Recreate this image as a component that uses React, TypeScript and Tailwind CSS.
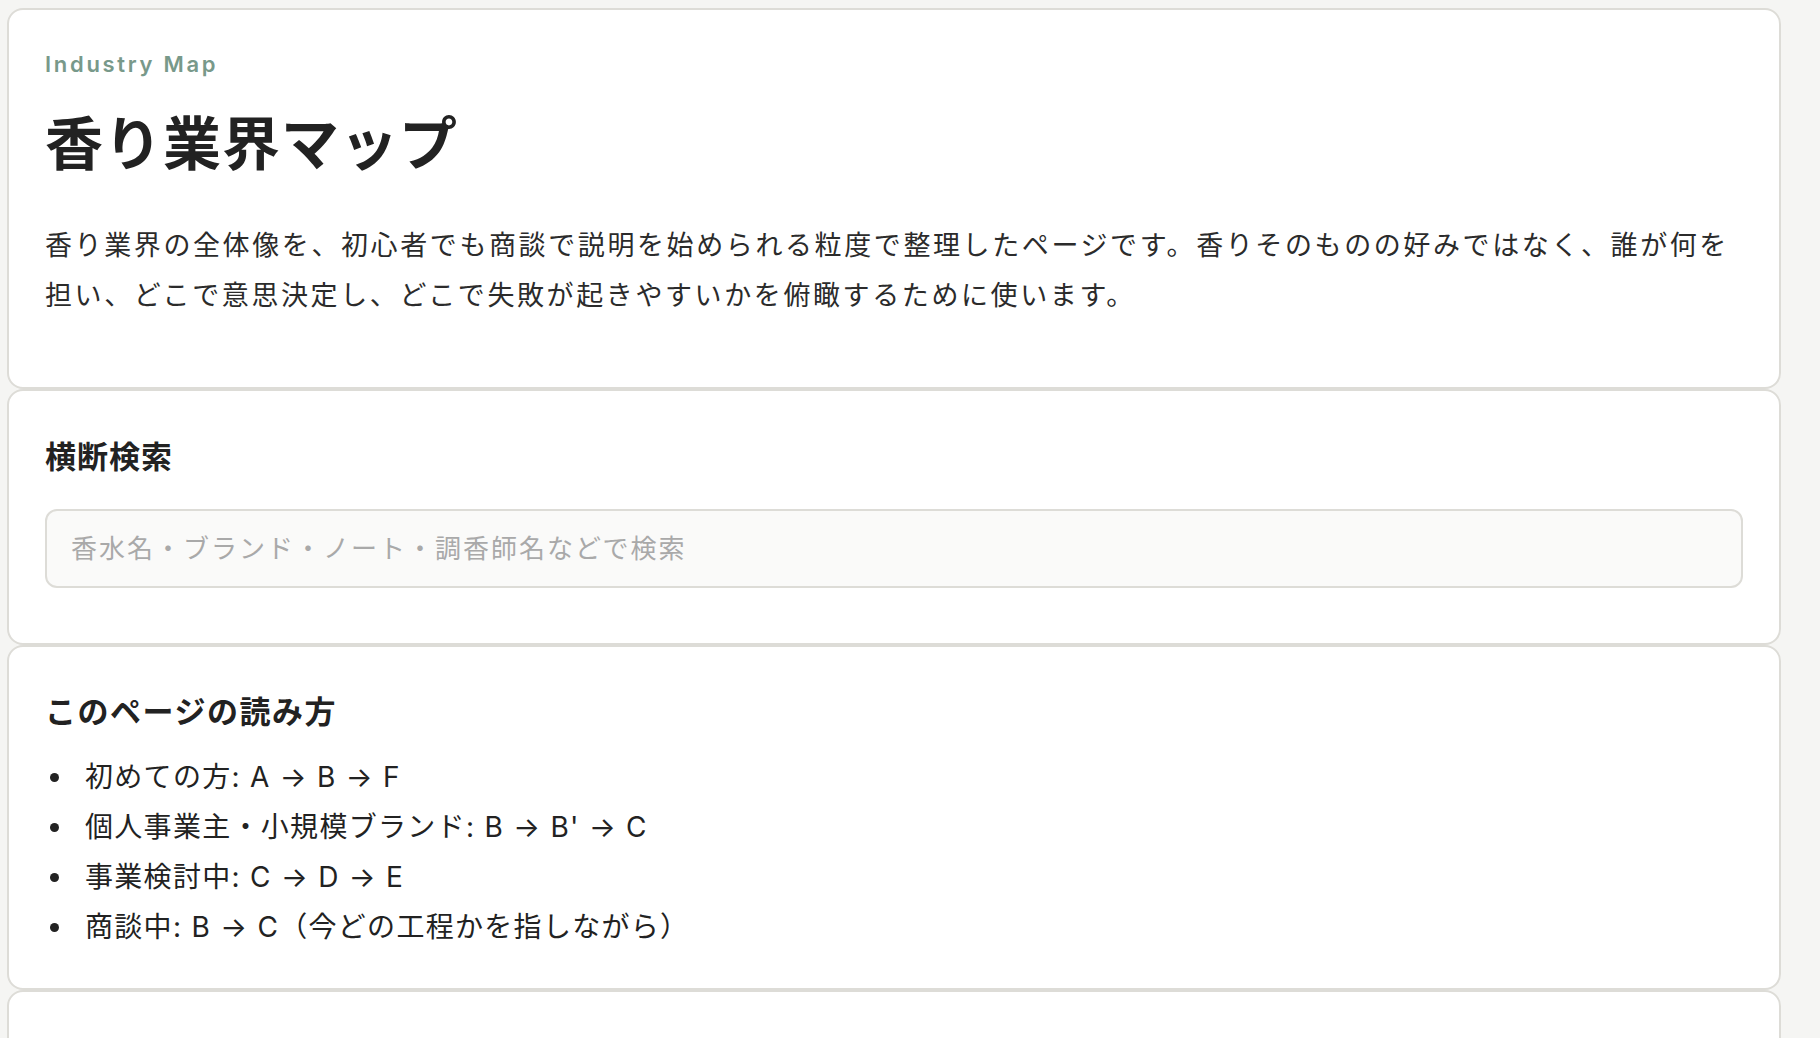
import type { ReactNode } from "react";

const routes = [
  "初めての方: A → B → F",
  "個人事業主・小規模ブランド: B → B' → C",
  "事業検討中: C → D → E",
  "商談中: B → C（今どの工程かを指しながら）",
];

type CardProps = {
  className?: string;
  children?: ReactNode;
};

const Card = ({ className = "", children }: CardProps) => (
  <section
    className={`rounded-[16px] border-2 border-[#dddcd7] bg-white px-[36px] ${className}`}
  >
    {children}
  </section>
);

const App = () => {
  return (
    <div className="min-h-screen overflow-hidden bg-[#f5f5f3] pl-[7px] pt-[8px] font-['Inter','Noto_Sans_CJK_JP',sans-serif] text-[#222]">
      <div className="flex w-[1774px] flex-col">
        <Card className="pt-[39px] pb-[66px]">
          <p className="text-[22px] font-semibold leading-[30px] tracking-[2.7px] text-[#78998a]">
            Industry Map
          </p>
          <h1 className="mt-[29px] text-[58px] font-bold leading-[72px] tracking-[1px] text-[#222]">
            香り業界マップ
          </h1>
          <p className="mt-[41px] text-[27px] leading-[50px] tracking-[2.6px] text-[#2b2b2b]">
            香り業界の全体像を、初心者でも商談で説明を始められる粒度で整理したページです。香りそのものの好みではなく、誰が何を担い、どこで意思決定し、どこで失敗が起きやすいかを俯瞰するために使います。
          </p>
        </Card>

        <Card className="pt-[43px] pb-[55px]">
          <h2 className="text-[31px] font-bold leading-[46px] tracking-[1px] text-[#222]">
            横断検索
          </h2>
          <input
            type="text"
            placeholder="香水名・ブランド・ノート・調香師名などで検索"
            className="mt-[29px] block h-[79px] w-full rounded-[12px] border-2 border-[#dddcd7] bg-[#fafaf9] px-[24px] text-[26px] tracking-[2px] text-[#333] outline-none placeholder:text-[#a9a9a9]"
          />
        </Card>

        <Card className="pt-[42px] pb-[36px]">
          <h2 className="text-[31px] font-bold leading-[46px] tracking-[1.5px] text-[#222]">
            このページの読み方
          </h2>
          <ul className="mt-[17px] flex flex-col">
            {routes.map((route) => (
              <li
                key={route}
                className="flex h-[50px] items-center text-[28px] tracking-[1.3px] text-[#222]"
              >
                <span className="ml-[5px] mr-[26px] h-[9px] w-[9px] shrink-0 rounded-full bg-[#222]" />
                {route}
              </li>
            ))}
          </ul>
        </Card>

        <Card className="h-[300px]" />
      </div>
    </div>
  );
};

export default App;
